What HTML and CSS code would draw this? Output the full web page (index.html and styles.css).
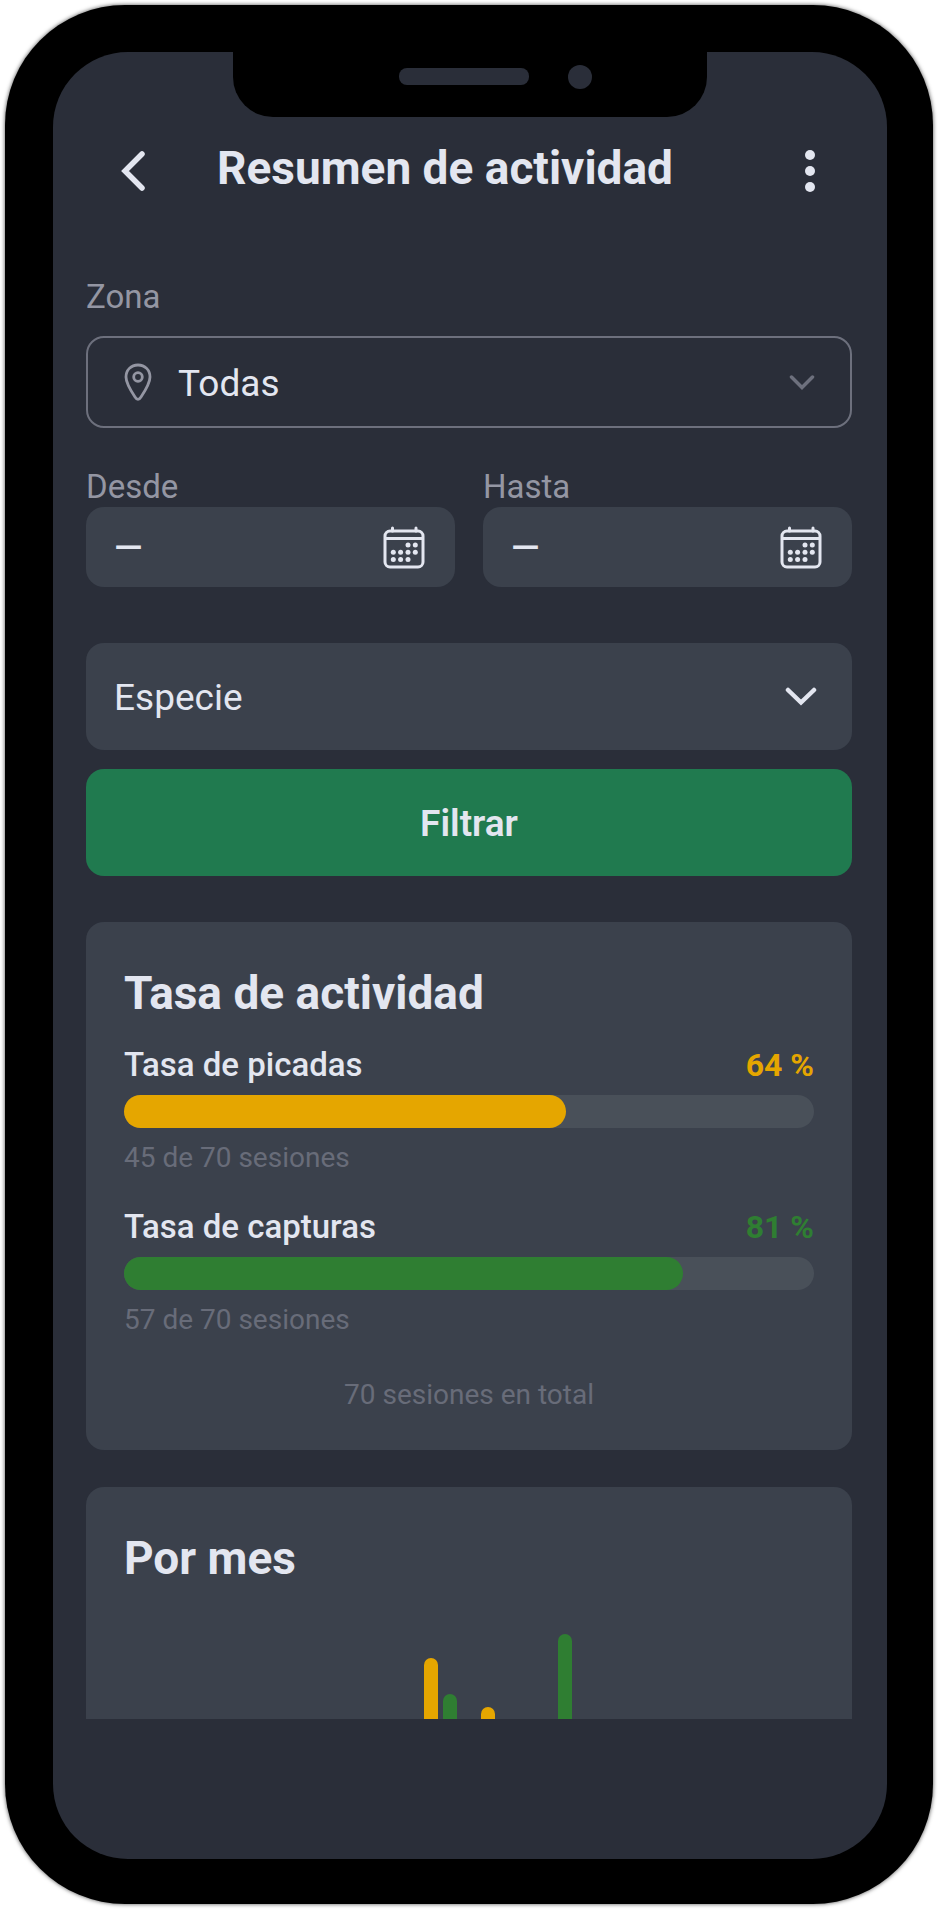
FILE: index.html
```html
<!DOCTYPE html>
<html lang="es">
<head>
<meta charset="utf-8">
<meta name="viewport" content="width=device-width, initial-scale=1">
<title>Resumen de actividad</title>
<link rel="stylesheet" href="styles.css">
</head>
<body>
<div class="phone">
  <div class="screen">
    <div class="notch"><span class="speaker"></span><span class="camera"></span></div>
    <header class="topbar">
      <button class="icon-button" type="button" aria-label="Volver">
        <svg width="24" height="40" viewBox="0 0 24 40" fill="none" stroke="currentColor" stroke-width="5.5" stroke-linecap="round" stroke-linejoin="miter"><path d="M21 3 4 20l17 17"/></svg>
      </button>
      <h1 class="title">Resumen de actividad</h1>
      <button class="icon-button menu-button" type="button" aria-label="Más opciones">
        <svg width="10" height="42" viewBox="0 0 10 42" fill="currentColor"><circle cx="5" cy="5" r="5"/><circle cx="5" cy="21" r="5"/><circle cx="5" cy="37" r="5"/></svg>
      </button>
    </header>
    <main class="content">
      <form class="filters">
        <label class="label" for="zona">Zona</label>
        <div class="zone">
          <svg class="pin" width="28" height="38" viewBox="0 0 28 38" fill="none" stroke="currentColor" stroke-width="2.8"><path d="M14 2C7 2 2 7 2 14c0 6 5 14 9 20 2 3.200 4 3.200 6 0 4-6 9-14 9-20C26 7 21 2 14 2Z"/><circle cx="14" cy="14" r="4.300"/></svg>
          <select class="select" id="zona"><option>Todas</option></select>
          <svg class="arrow" width="26" height="15" viewBox="0 0 26 15" fill="none" stroke="currentColor" stroke-width="3.500" stroke-linecap="round"><path d="m2.500 2 10.500 10.500L23.500 2"/></svg>
        </div>
        <div class="dates">
          <div class="date">
            <label class="label" for="desde">Desde</label>
            <div class="date-field">
              <input class="date-input" id="desde" type="text" value="—">
              <button class="icon-button" type="button" aria-label="Elegir fecha desde">
                <svg width="42" height="43" viewBox="0 0 42 43" fill="none" stroke="currentColor" stroke-width="3" stroke-linecap="round"><rect x="2" y="5" width="38" height="36" rx="5"/><path d="M3 12.500h36M9.500 2v3M33 2v3"/><g fill="currentColor" stroke="none"><circle cx="25" cy="19" r="2.500"/><circle cx="32.300" cy="19" r="2.500"/><circle cx="10.300" cy="26.300" r="2.500"/><circle cx="17.600" cy="26.300" r="2.500"/><circle cx="25" cy="26.300" r="2.500"/><circle cx="32.300" cy="26.300" r="2.500"/><circle cx="10.300" cy="33.600" r="2.500"/><circle cx="17.600" cy="33.600" r="2.500"/><circle cx="25" cy="33.600" r="2.500"/></g></svg>
              </button>
            </div>
          </div>
          <div class="date">
            <label class="label" for="hasta">Hasta</label>
            <div class="date-field">
              <input class="date-input" id="hasta" type="text" value="—">
              <button class="icon-button" type="button" aria-label="Elegir fecha hasta">
                <svg width="42" height="43" viewBox="0 0 42 43" fill="none" stroke="currentColor" stroke-width="3" stroke-linecap="round"><rect x="2" y="5" width="38" height="36" rx="5"/><path d="M3 12.500h36M9.500 2v3M33 2v3"/><g fill="currentColor" stroke="none"><circle cx="25" cy="19" r="2.500"/><circle cx="32.300" cy="19" r="2.500"/><circle cx="10.300" cy="26.300" r="2.500"/><circle cx="17.600" cy="26.300" r="2.500"/><circle cx="25" cy="26.300" r="2.500"/><circle cx="32.300" cy="26.300" r="2.500"/><circle cx="10.300" cy="33.600" r="2.500"/><circle cx="17.600" cy="33.600" r="2.500"/><circle cx="25" cy="33.600" r="2.500"/></g></svg>
              </button>
            </div>
          </div>
        </div>
        <div class="species">
          <select class="select" aria-label="Especie"><option>Especie</option></select>
          <svg class="arrow" width="32" height="19" viewBox="0 0 32 19" fill="none" stroke="currentColor" stroke-width="4.500" stroke-linecap="round"><path d="m3 3 13 12.500L29 3"/></svg>
        </div>
        <button class="submit" type="button">Filtrar</button>
      </form>

      <section class="card">
        <h2 class="card-title">Tasa de actividad</h2>
        <div class="rate rate-bites">
          <div class="rate-head"><span>Tasa de picadas</span><span class="rate-value">64 %</span></div>
          <div class="track"><div class="fill" style="width:64%"></div></div>
          <p class="note">45 de 70 sesiones</p>
        </div>
        <div class="rate rate-catches">
          <div class="rate-head"><span>Tasa de capturas</span><span class="rate-value">81 %</span></div>
          <div class="track"><div class="fill" style="width:81%"></div></div>
          <p class="note">57 de 70 sesiones</p>
        </div>
        <p class="note total">70 sesiones en total</p>
      </section>

      <section class="card card-cut">
        <h2 class="card-title">Por mes</h2>
        <div class="chart">
          <div class="month"></div><div class="month"></div><div class="month"></div><div class="month"></div><div class="month"></div>
          <div class="month"><span class="bar bar-bites" style="height:61px"></span><span class="bar bar-catches" style="height:25px"></span></div>
          <div class="month"><span class="bar bar-bites" style="height:12px"></span><span class="bar"></span></div>
          <div class="month"><span class="bar"></span><span class="bar bar-catches" style="height:85px"></span></div>
          <div class="month"></div><div class="month"></div><div class="month"></div><div class="month"></div>
        </div>
      </section>
    </main>
  </div>
</div>
</body>
</html>
```

FILE: styles.css
```css
:root {
  --bg: #2a2e39;
  --surface: #3b414c;
  --text: #e3e6f0;
  --label: #9496a3;
  --muted: #686c79;
  --line: #6d707d;
  --amber: #e5a600;
  --green: #2f7e32;
}

* { box-sizing: border-box; }

body {
  margin: 0;
  padding: 5px;
  background: #fff;
  color: var(--text);
  font-family: Roboto, "Liberation Sans", sans-serif;
}

h1, h2, p { margin: 0; }

button, input, select {
  margin: 0;
  padding: 0;
  border: 0;
  background: none;
  color: inherit;
  font-family: inherit;
}

svg { display: block; flex: none; }

.phone {
  padding: 47px 46px 45px 48px;
  border-radius: 120px;
  background: #000;
  box-shadow: 0 0 4px rgba(0, 0, 0, 0.7);
}

.screen {
  padding-bottom: 140px;
  border-radius: 75px;
  background: var(--bg);
  overflow: hidden;
}

.notch {
  display: flex;
  align-items: center;
  gap: 39px;
  width: 474px;
  max-width: 60%;
  height: 65px;
  margin: 0 auto;
  padding: 0 0 16px 166px;
  border-radius: 0 0 40px 40px;
  background: #000;
}

.speaker {
  width: 130px;
  height: 17px;
  border-radius: 8px;
  background: var(--bg);
}

.camera {
  width: 24px;
  height: 24px;
  border-radius: 50%;
  background: var(--bg);
}

.topbar {
  display: flex;
  align-items: center;
  gap: 72px;
  height: 62px;
  margin-top: 23px;
  padding: 0 72px 0 68px;
}

.icon-button { flex: none; cursor: pointer; }

.menu-button { margin-left: auto; }

.title, .card-title {
  font-size: 46px;
  line-height: 56px;
  font-weight: 700;
}

.title { align-self: flex-start; flex: none; white-space: nowrap; }

.content { padding: 75px 35px 0 33px; }

.filters { display: flex; flex-direction: column; }

.label {
  color: var(--label);
  font-size: 33px;
  line-height: 40px;
}

.zone {
  display: flex;
  align-items: center;
  position: relative;
  height: 92px;
  margin-top: 19px;
  border: 2px solid var(--line);
  border-radius: 18px;
  color: var(--label);
}

.select {
  appearance: none;
  width: 100%;
  height: 100%;
  padding-top: 2px;
  font-size: 37px;
  color: var(--text);
}

.pin { position: absolute; left: 36px; pointer-events: none; }

.arrow { position: absolute; right: 35px; pointer-events: none; }

.zone .select { padding-left: 90px; }

.zone .arrow { color: var(--line); }

.dates {
  display: grid;
  grid-template-columns: repeat(2, minmax(0, 1fr));
  gap: 28px;
  margin-top: 39px;
}

.date { display: flex; flex-direction: column; }

.date-field {
  display: flex;
  align-items: center;
  height: 80px;
  padding: 0 30px 0 28px;
  border-radius: 18px;
  background: var(--surface);
}

.date-input {
  flex: 1;
  min-width: 0;
  font-size: 37px;
  font-weight: 500;
}

.species {
  display: flex;
  align-items: center;
  position: relative;
  height: 107px;
  margin-top: 56px;
  border-radius: 18px;
  background: var(--surface);
}

.species .select { padding-left: 28px; }

.submit {
  height: 107px;
  margin-top: 19px;
  padding-top: 2px;
  border-radius: 18px;
  background: #207a4f;
  font-size: 37px;
  font-weight: 600;
  cursor: pointer;
}

.card {
  margin-top: 46px;
  padding: 43px 38px 37px;
  border-radius: 18px;
  background: var(--surface);
}

.card-cut {
  margin-top: 37px;
  padding-bottom: 0;
  border-radius: 18px 18px 0 0;
}

.rate { margin-top: 31px; }

.card-title + .rate { margin-top: 24px; }

.rate-head {
  display: flex;
  justify-content: space-between;
  font-size: 33px;
  line-height: 40px;
  font-weight: 500;
}

.rate-value { font-size: 32px; font-weight: 700; }

.track {
  height: 33px;
  margin: 10px 0 12px;
  border-radius: 17px;
  background: #495059;
}

.fill { height: 100%; border-radius: 17px; }

.rate-bites .rate-value { color: var(--amber); }
.rate-catches .rate-value { color: var(--green); }
.rate-bites .fill, .bar-bites { background: var(--amber); }
.rate-catches .fill, .bar-catches { background: var(--green); }

.note {
  color: var(--muted);
  font-size: 28px;
  line-height: 36px;
}

.total { margin-top: 39px; text-align: center; }

.chart {
  display: grid;
  grid-template-columns: repeat(12, 1fr);
  height: 133px;
}

.month {
  display: flex;
  align-items: flex-end;
  justify-content: center;
  gap: 5px;
}

.bar {
  width: 14px;
  border-radius: 7px 7px 0 0;
}
```
